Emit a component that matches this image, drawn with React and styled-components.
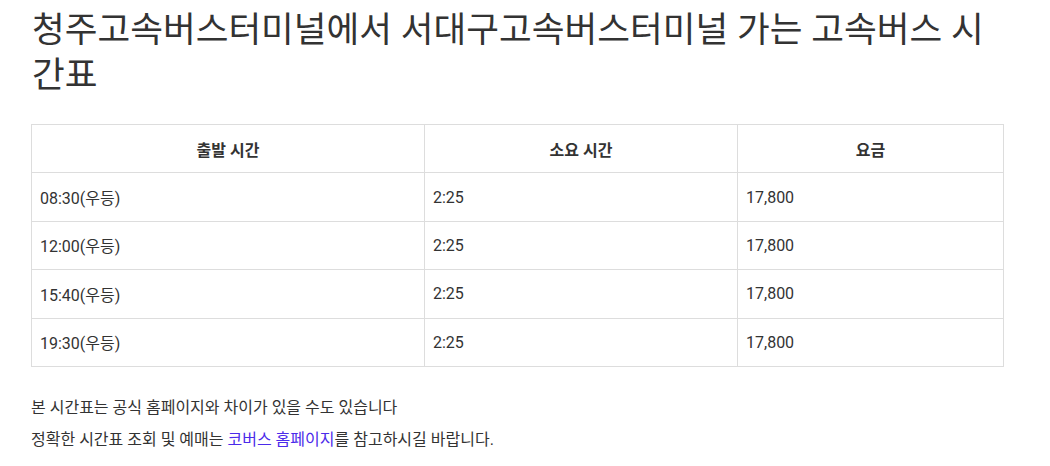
import React from "react";
import styled, { createGlobalStyle } from "styled-components";

const Global = createGlobalStyle`
  html, body { margin: 0; padding: 0; background: #fff; }
  body {
    font-family: Roboto, "Noto Sans CJK KR", "Noto Sans", sans-serif;
    color: #333;
  }
`;

const Page = styled.div`
  padding: 8px 46px 0 31px;
`;

const Title = styled.h1`
  margin: 0 0 26px 1px;
  font-size: 35.6px;
  line-height: 45px;
  font-weight: 400;
  color: #333;
`;

const Table = styled.table`
  width: 972px;
  table-layout: fixed;
  border-collapse: collapse;
  font-size: 16px;
  color: #333;
`;

const Col = styled.col`
  width: ${(p) => p.$w}px;
`;

const Th = styled.th`
  height: 47.4px;
  padding: 0 9px;
  border: 1px solid #ddd;
  font-weight: 700;
  text-align: center;
`;

const Td = styled.td`
  height: 47.4px;
  padding: 0 8px;
  border: 1px solid #ddd;
  text-align: left;
`;

const Notes = styled.div`
  margin-top: 25px;
  font-size: 16px;
  line-height: 32px;
  color: #333;
`;

const Link = styled.a`
  color: #4b2bea;
  text-decoration: none;
`;

const rows = ["08:30(우등)", "12:00(우등)", "15:40(우등)", "19:30(우등)"];

export default function App() {
  return (
    <Page>
      <Global />
      <Title>청주고속버스터미널에서 서대구고속버스터미널 가는 고속버스 시간표</Title>
      <Table>
        <colgroup>
          <Col $w={393} />
          <Col $w={313} />
          <Col $w={266} />
        </colgroup>
        <thead>
          <tr>
            <Th>출발 시간</Th>
            <Th>소요 시간</Th>
            <Th>요금</Th>
          </tr>
        </thead>
        <tbody>
          {rows.map((r) => (
            <tr key={r}>
              <Td>{r}</Td>
              <Td>2:25</Td>
              <Td>17,800</Td>
            </tr>
          ))}
        </tbody>
      </Table>
      <Notes>
        <div>본 시간표는 공식 홈페이지와 차이가 있을 수도 있습니다</div>
        <div>
          정확한 시간표 조회 및 예매는 <Link href="#">코버스 홈페이지</Link>를 참고하시길 바랍니다.
        </div>
      </Notes>
    </Page>
  );
}
